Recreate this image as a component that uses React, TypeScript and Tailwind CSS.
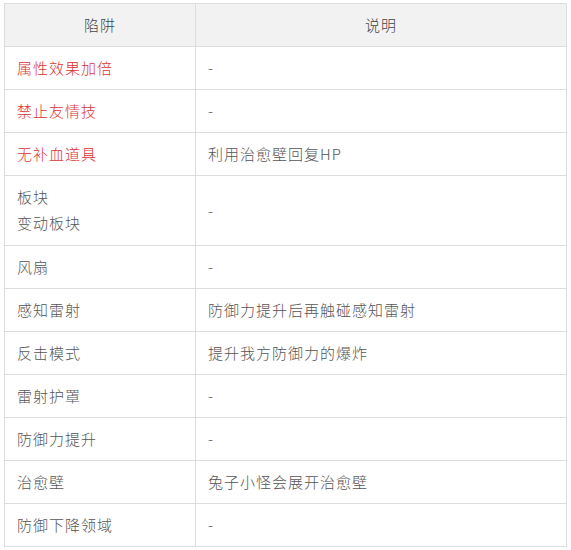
import React from "react";

type Row = { name: string[]; red?: boolean; desc: string };

const rows: Row[] = [
  { name: ["属性效果加倍"], red: true, desc: "-" },
  { name: ["禁止友情技"], red: true, desc: "-" },
  { name: ["无补血道具"], red: true, desc: "利用治愈壁回复HP" },
  { name: ["板块", "变动板块"], desc: "-" },
  { name: ["风扇"], desc: "-" },
  { name: ["感知雷射"], desc: "防御力提升后再触碰感知雷射" },
  { name: ["反击模式"], desc: "提升我方防御力的爆炸" },
  { name: ["雷射护罩"], desc: "-" },
  { name: ["防御力提升"], desc: "-" },
  { name: ["治愈壁"], desc: "兔子小怪会展开治愈壁" },
  { name: ["防御下降领域"], desc: "-" },
];

export default function App() {
  return (
    <div
      className="bg-white w-[571px] h-[550px] pl-[4px] pt-[3px]"
      style={{ fontFamily: '"Microsoft YaHei", "Noto Sans CJK SC", "Noto Sans", sans-serif' }}
    >
      <table className="w-[563px] border-collapse text-[15px] leading-[26px] tracking-[1px] font-light text-[#555555]">
        <thead>
          <tr className="bg-[#f2f2f2]">
            <th className="w-[191px] border border-[#dddddd] h-[43px] py-[8px] px-[12px] font-light text-center text-[#444444]">
              陷阱
            </th>
            <th className="border border-[#dddddd] h-[43px] py-[8px] px-[12px] font-light text-center text-[#444444]">
              说明
            </th>
          </tr>
        </thead>
        <tbody>
          {rows.map((r, i) => (
            <tr key={i}>
              <td
                className={
                  "border border-[#dddddd] px-[12px] align-middle " +
                  (r.name.length > 1 ? "py-[8px] pb-[9px] " : "py-[8px] ") +
                  (r.red ? "text-[#dd3333]" : "")
                }
              >
                {r.name.map((n, j) => (
                  <div key={j}>{n}</div>
                ))}
              </td>
              <td className="border border-[#dddddd] py-[8px] px-[12px] align-middle">{r.desc}</td>
            </tr>
          ))}
        </tbody>
      </table>
    </div>
  );
}
